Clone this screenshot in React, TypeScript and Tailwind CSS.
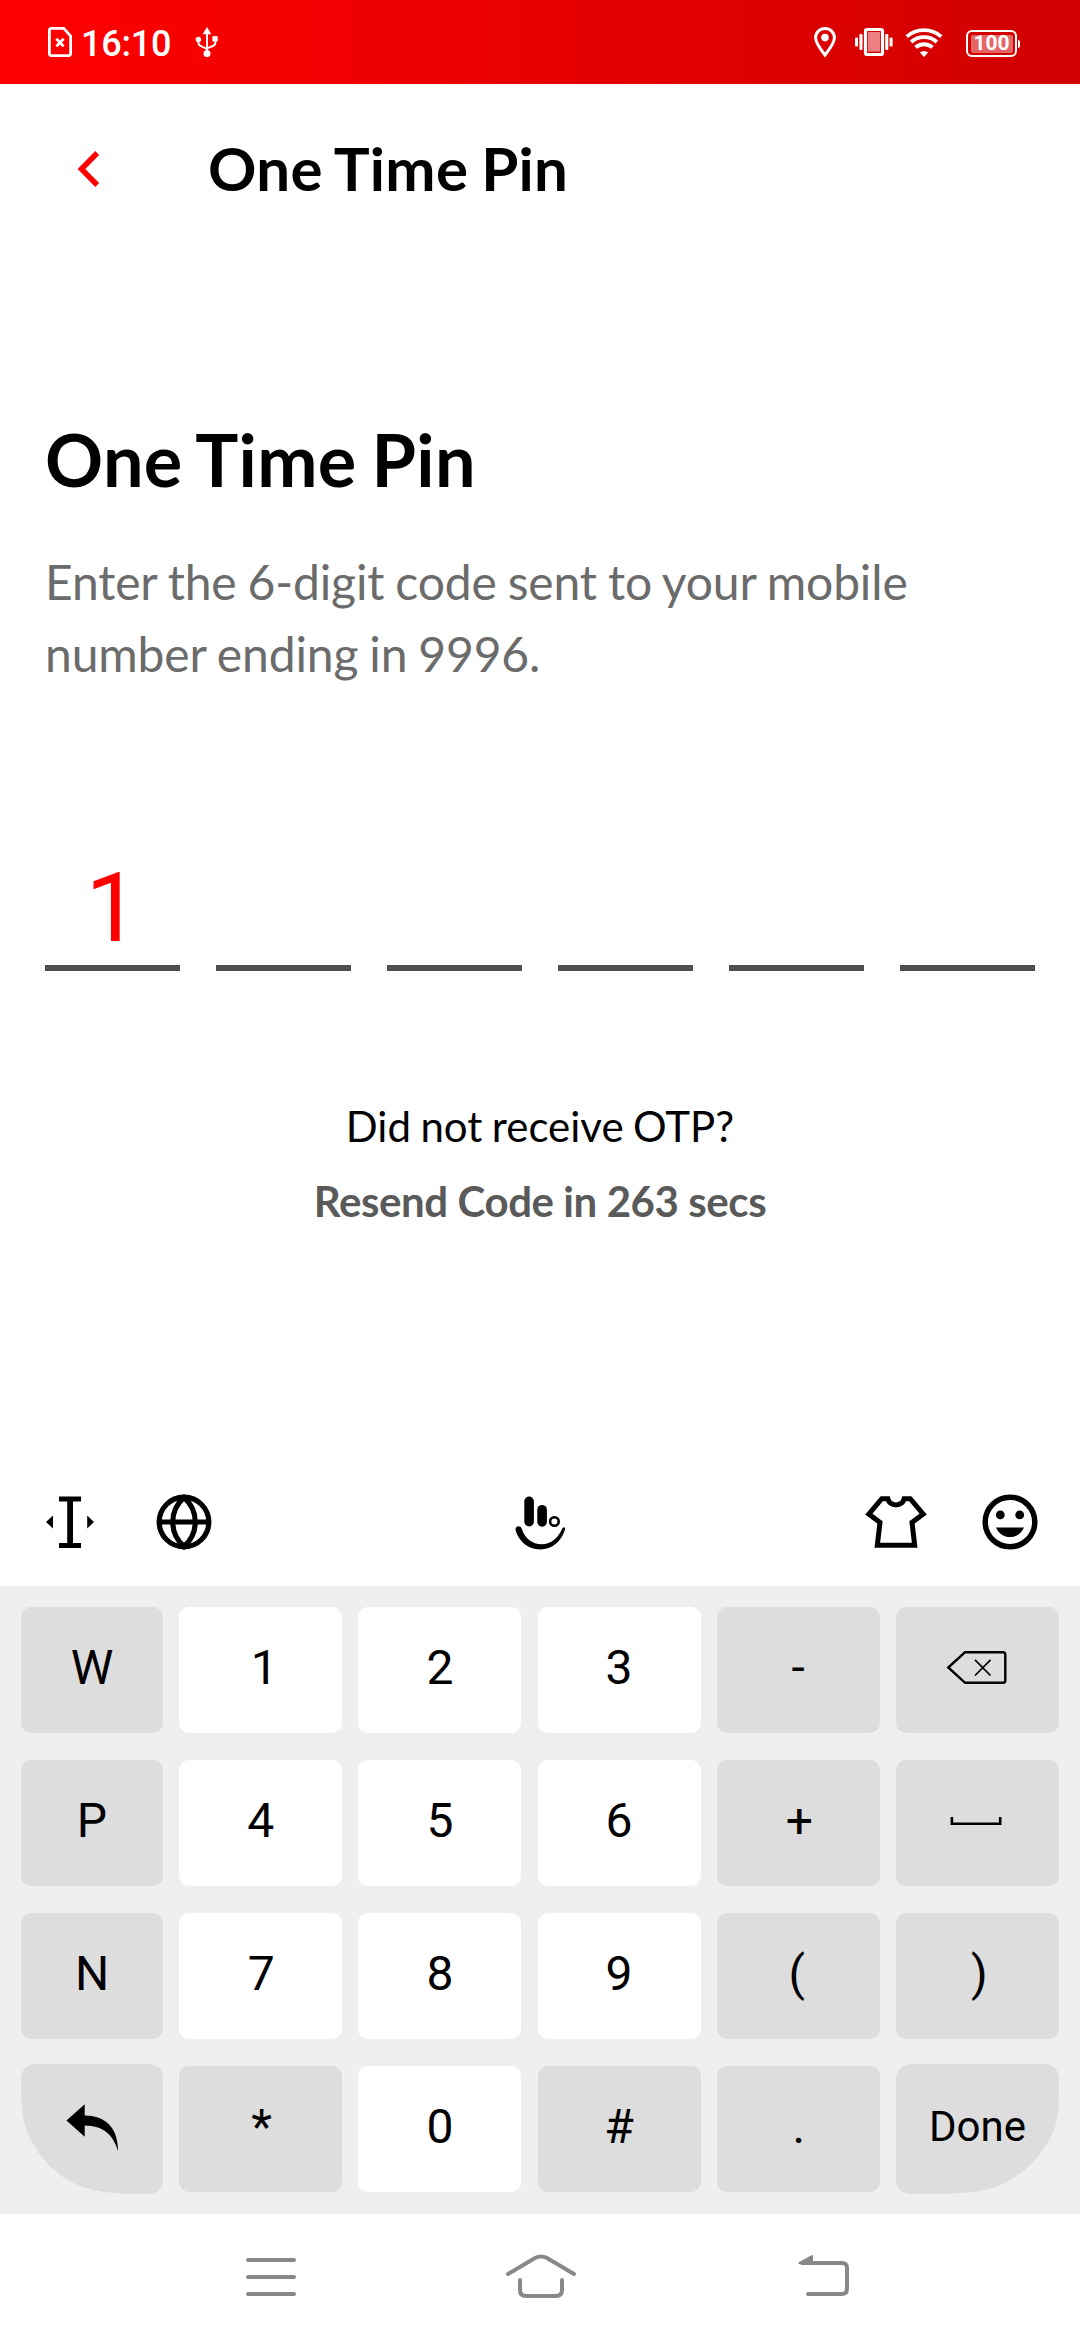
import type { ReactNode } from "react";

function StatusBar() {
  return (
    <div className="flex h-[84px] items-center bg-linear-to-r from-[#ff0000] to-[#d00000] text-white">
      <svg className="ml-[48px] h-[84px] w-[24px]" viewBox="48 0 24 84" fill="none" stroke="currentColor" strokeWidth="2.8">
        <path d="M51.5 28.4 H63.8 L70.6 36 V53.6 Q70.6 55.6 68.6 55.6 H51.4 Q49.4 55.6 49.4 53.6 V30.4 Q49.4 28.4 51.5 28.4 Z" />
        <path d="M56.4 38.8 L63.6 46.4 M63.6 38.8 L56.4 46.4" />
      </svg>
      <span className="mt-[4px] ml-[9px] w-[91px] text-[36px] leading-none font-medium tracking-[-0.2px]">16:10</span>
      <svg className="ml-[23px] h-[84px] w-[24px]" viewBox="195 0 24 84" fill="currentColor">
        <path d="M207 27 L211.3 34.2 H202.7 Z" />
        <circle cx="207" cy="53.6" r="3.5" />
        <circle cx="198.4" cy="39.4" r="2.7" />
        <rect x="212.4" y="36.2" width="5.3" height="5.2" />
        <path d="M207 33 V53 M198.4 40 V42.5 Q198.4 45 201 46.2 L207 49 M215.4 40 V42.5 Q215.4 45 212.8 46 L207 48.4" fill="none" stroke="currentColor" strokeWidth="1.9" />
      </svg>
      <svg className="ml-auto h-[84px] w-[24px]" viewBox="813 0 24 84" fill="none" stroke="currentColor" strokeWidth="3">
        <path d="M825 55 C819 47.5 815.6 42.5 815.6 37.8 A9.4 9.4 0 0 1 834.4 37.8 C834.4 42.5 831 47.5 825 55 Z" />
        <circle cx="825" cy="37.6" r="3.8" fill="currentColor" stroke="none" />
      </svg>
      <svg className="ml-[17px] h-[84px] w-[40px]" viewBox="854 0 40 84" fill="currentColor">
        <rect x="865.5" y="29.5" width="17" height="25" rx="1.5" fill="none" stroke="currentColor" strokeWidth="3.2" />
        <rect x="868" y="32" width="12" height="19.6" opacity="0.5" />
        <rect x="859.4" y="34" width="3.1" height="16" rx="1.2" />
        <rect x="855" y="37.4" width="3" height="9" rx="1.2" />
        <rect x="885.2" y="34" width="3.1" height="16" rx="1.2" />
        <rect x="889.6" y="37.4" width="3" height="9" rx="1.2" />
      </svg>
      <svg className="ml-[11px] h-[84px] w-[38px]" viewBox="905 0 38 84" fill="none" stroke="currentColor" strokeWidth="3.9">
        <path d="M924 57 L919.8 52.4 Q924 49.4 928.2 52.4 Z" fill="currentColor" stroke="none" />
        <path d="M915.6 47.4 A12.6 12.6 0 0 1 932.4 47.4" />
        <path d="M911.1 42 A19.4 19.4 0 0 1 936.9 42" />
        <path d="M906.8 36.6 A26.2 26.2 0 0 1 941.2 36.6" />
      </svg>
      <div className="mt-[3px] mr-[60px] ml-[23px] flex items-center">
        <div className="flex h-[27px] w-[51px] items-center justify-center rounded-[6px] border-2 border-white">
          <div className="flex h-[18px] w-[42px] items-center justify-center rounded-[2px] bg-white/40 text-[21px] leading-none font-bold">
            100
          </div>
        </div>
        <div className="ml-px h-[8px] w-[2px] rounded-r bg-white" />
      </div>
    </div>
  );
}

type KeyDef = { label?: string; icon?: ReactNode; tone: "light" | "dark"; shift?: string; shape?: "left" | "right" };

const backspace = (
  <svg className="h-[40px] w-[64px]" viewBox="945.5 1650 64 40" fill="none" stroke="currentColor" strokeWidth="2.4">
    <path d="M948.8 1667.5 L965.6 1652.2 H1003.5 Q1005.8 1652.2 1005.8 1654.5 V1680.5 Q1005.8 1682.8 1003.5 1682.8 H965.6 Z" />
    <path d="M975.5 1659.9 L991 1675.5 M991 1659.9 L975.5 1675.5" strokeWidth="1.7" />
  </svg>
);

const space = (
  <svg className="h-[40px] w-[64px]" viewBox="945.5 1803 64 40" fill="none" stroke="currentColor" strokeWidth="2.6">
    <path d="M952.4 1817 V1823.7 H1000.7 V1817" />
  </svg>
);

const returnArrow = (
  <svg className="h-[60px] w-[64px]" viewBox="60 2097 64 60" fill="currentColor">
    <path d="M66.5 2120.4 L84.7 2104.2 V2115.4 C104 2115.4 118 2126 118.1 2151 C113 2134 103 2125.6 84.7 2125.4 V2136.8 Z" />
  </svg>
);

const rows: KeyDef[][] = [
  [
    { label: "W", tone: "dark" },
    { label: "1", tone: "light", shift: "pl-[7px]" },
    { label: "2", tone: "light" },
    { label: "3", tone: "light" },
    { label: "-", tone: "dark" },
    { icon: backspace, tone: "dark" },
  ],
  [
    { label: "P", tone: "dark" },
    { label: "4", tone: "light" },
    { label: "5", tone: "light" },
    { label: "6", tone: "light" },
    { label: "+", tone: "dark", shift: "pl-[2px]" },
    { icon: space, tone: "dark" },
  ],
  [
    { label: "N", tone: "dark" },
    { label: "7", tone: "light", shift: "pl-[1px]" },
    { label: "8", tone: "light" },
    { label: "9", tone: "light" },
    { label: "(", tone: "dark", shift: "pr-[3px]" },
    { label: ")", tone: "dark", shift: "pl-[4px]" },
  ],
  [
    { icon: returnArrow, tone: "dark", shape: "left" },
    { label: "*", tone: "dark", shift: "pl-[2px]" },
    { label: "0", tone: "light" },
    { label: "#", tone: "dark" },
    { label: ".", tone: "dark", shift: "pl-[1px]" },
    { label: "Done", tone: "dark", shape: "right" },
  ],
];

function Key({ label, icon, tone, shift = "", shape }: KeyDef) {
  if (shape) {
    return (
      <button className="relative -my-[2px] flex h-[130px] items-center justify-center pb-[4px] text-[42px] leading-none">
        <svg className="absolute inset-0 size-full text-[#dddddd]" viewBox={shape === "left" ? "21 2064 142 130" : "896 2064 163 130"} fill="currentColor">
          {shape === "left" ? (
            <path d="M35 2064 H149 Q163 2065 163 2079 V2181 Q162 2193 149 2194 H138 C118 2194 98 2192 83 2187 C57 2178 37 2157 26 2129 C22.5 2118 21 2104 21 2086 V2078 Q22 2065 35 2064 Z" />
          ) : (
            <path d="M911 2064 H1045 Q1058 2065 1059 2078 V2086 C1059 2104 1058 2118 1054.5 2129 C1043 2157 1021 2178 993 2188 C976 2192.5 956 2194 930 2194 H911 Q897 2193 896 2180 V2079 Q897 2065 911 2064 Z" />
          )}
        </svg>
        <span className="relative">{label ?? icon}</span>
      </button>
    );
  }
  return (
    <button
      className={`flex h-[126px] items-center justify-center rounded-[10px] text-[48px] leading-none ${icon ? "" : "pb-[4px]"} ${shift} ${tone === "light" ? "bg-white" : "bg-[#dddddd]"}`}
    >
      {label ?? icon}
    </button>
  );
}

function Keyboard() {
  return (
    <div>
      <div className="flex h-[129px] items-center pr-[40px] pl-[45px]">
        <svg className="h-[60px] w-[50px]" viewBox="45 1491.5 50 60" fill="currentColor">
          <path d="M59 1496 H81 V1501 H73 V1542.5 H81 V1547.6 H59 V1542.5 H67.2 V1501 H59 Z" />
          <path d="M46 1521.5 L53 1515 V1528 Z M94 1521.5 L87.2 1515 V1528 Z" />
        </svg>
        <svg className="ml-[59px] h-[60px] w-[60px]" viewBox="154 1491.5 60 60" fill="none" stroke="currentColor" strokeWidth="5.2">
          <circle cx="184" cy="1521.5" r="24.8" />
          <path d="M184 1497 C169 1510 169 1533 184 1546 C199 1533 199 1510 184 1497 Z M159 1521.5 H209" />
        </svg>
        <svg className="ml-[296px] h-[60px] w-[60px]" viewBox="510 1491.5 60 60" fill="currentColor">
          <rect x="524.3" y="1496" width="9.6" height="30" rx="4.8" />
          <rect x="537.3" y="1504.4" width="9.6" height="21.8" rx="4.8" />
          <circle cx="554.4" cy="1521" r="4.3" fill="none" stroke="currentColor" strokeWidth="2.6" />
          <path d="M515.5 1529.5 C515 1525 520.5 1524.5 521.7 1528 C524.5 1537.5 532 1543.8 542 1543.8 C551 1543.8 558.5 1537 562.3 1528 C563.5 1526 565.4 1526.6 565 1529 C561.5 1540.5 552.5 1549 540 1549 C528 1549 518.5 1540.5 515.5 1529.5 Z" />
        </svg>
        <svg className="ml-auto h-[60px] w-[64px]" viewBox="864 1491.5 64 60" fill="none" stroke="currentColor" strokeWidth="5">
          <path d="M881.8 1498.2 H887.8 C888.8 1502 891.8 1504.4 896 1504.4 S903.2 1502 904.2 1498.2 H910.2 L923.2 1513.6 L912 1522 L914.7 1544.8 H877.3 L880 1522 L868.8 1513.6 Z" />
        </svg>
        <svg className="ml-[52px] h-[60px] w-[60px]" viewBox="980 1491.5 60 60" fill="currentColor">
          <circle cx="1010" cy="1521.5" r="24.8" fill="none" stroke="currentColor" strokeWidth="5.5" />
          <circle cx="1000.3" cy="1514.4" r="4.4" />
          <circle cx="1019.7" cy="1514.4" r="4.4" />
          <path d="M996 1527 H1024 C1021 1533.5 1016 1536.6 1010 1536.6 S999 1533.5 996 1527 Z" />
        </svg>
      </div>
      <div className="h-[628px] bg-[#efefef] px-[21px] pt-[21px]">
        <div className="flex flex-col gap-[27px]">
          {rows.map((row, i) => (
            <div key={i} className="grid h-[126px] grid-cols-[142px_163px_163px_163px_163px_163px] justify-between">
              {row.map((k, j) => (
                <Key key={j} {...k} />
              ))}
            </div>
          ))}
        </div>
      </div>
    </div>
  );
}

function NavBar() {
  return (
    <div className="flex h-[126px] items-center pl-[244px] text-[#888888]">
      <svg className="h-[60px] w-[54px]" viewBox="244 2247 54 60" fill="none" stroke="currentColor" strokeWidth="4" strokeLinecap="round">
        <path d="M248 2260 H294 M248 2277 H294 M248 2294 H294" />
      </svg>
      <svg className="ml-[206px] h-[60px] w-[74px]" viewBox="504 2247 74 60" fill="none" stroke="currentColor" strokeWidth="4" strokeLinecap="round">
        <path d="M508 2274 L535 2258 Q541 2255 547 2258 L574 2274" />
        <path d="M520 2280 V2290 Q520 2296 526 2296 H556 Q562 2296 562 2290 V2280" />
      </svg>
      <svg className="ml-[218px] h-[60px] w-[56px]" viewBox="796 2247 56 60" fill="none" stroke="currentColor" strokeWidth="4" strokeLinecap="round">
        <path d="M802 2263 H842 Q847 2263 847 2268 V2289 Q847 2294 842 2294 H808" />
        <path d="M798.3 2262.6 L811 2255.4 Q813 2254.5 813 2256.5 V2264 H799 Q797.6 2263.6 798.3 2262.6 Z" fill="currentColor" stroke="none" />
      </svg>
    </div>
  );
}

const digits = ["1", "", "", "", "", ""];

export default function App() {
  return (
    <div className="flex h-[2340px] w-[1080px] flex-col overflow-hidden bg-white font-['Roboto',sans-serif] text-black">
      <StatusBar />
      <header className="flex h-[170px] items-center font-['Lato',sans-serif]">
        <svg className="ml-[74px] h-[48px] w-[30px]" viewBox="74 145 30 48" fill="none" stroke="#ff0000" strokeWidth="5.4">
          <path d="M97.2 153 L81.4 169 L97.2 185" />
        </svg>
        <h1 className="mb-[2px] ml-[104px] text-[60px] leading-[72px] font-bold tracking-[0.3px] [word-spacing:-2px]">One Time Pin</h1>
      </header>
      <main className="flex flex-1 flex-col px-[45px] pt-[162px] font-['Lato',sans-serif]">
        <h2 className="text-[72px] leading-[86px] font-bold tracking-[0.35px] [word-spacing:-3px]">One Time Pin</h2>
        <p className="mt-[44px] text-[48px] leading-[72px] tracking-[-0.15px] whitespace-nowrap text-[#6b6b6b] [word-spacing:-1.1px]">
          Enter the 6-digit code sent to your mobile
          <br />
          number ending in 9996.
        </p>
        <div className="mt-[146px] flex justify-between font-['Roboto',sans-serif]">
          {digits.map((d, i) => (
            <div key={i} className="h-[135px] w-[135px] border-b-[6px] border-[#4f4f4f] pt-[24px] text-center text-[96px] leading-[96px] text-[#ff0000]">
              {d}
            </div>
          ))}
        </div>
        <p className="mt-[130px] text-center text-[42px] leading-[50px] [word-spacing:-1.3px]">Did not receive OTP?</p>
        <p className="mt-[25px] text-center text-[42px] leading-[50px] font-bold tracking-[-0.42px] text-[#5a5a5a]">Resend Code in 263 secs</p>
      </main>
      <Keyboard />
      <NavBar />
    </div>
  );
}
